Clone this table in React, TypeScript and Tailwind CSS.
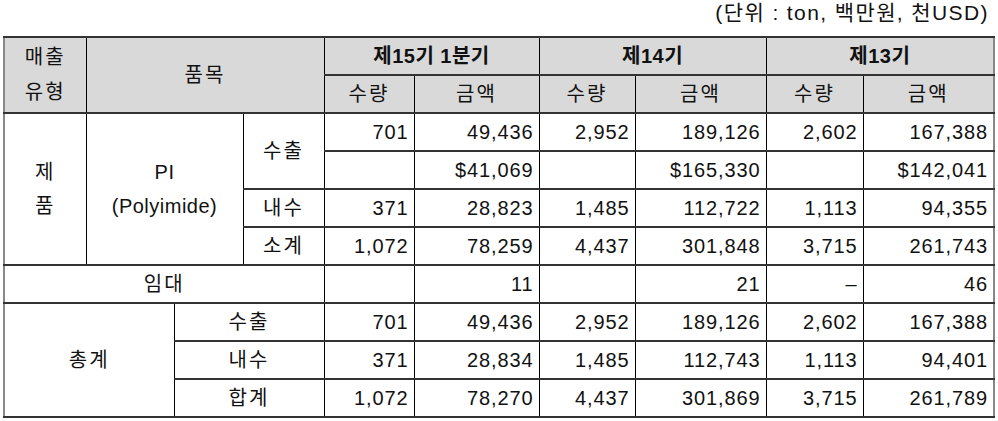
const font = { fontFamily: '"Liberation Sans", "Noto Sans CJK KR", sans-serif' };

const cell = "border-x border-x-black border-y-2 border-y-[#333]";
const hd = `bg-[#d9d9d9] ${cell} text-center`;
const td = `${cell} px-[5px]`;
const num = `${td} text-right tracking-[0.9px]`;
const lbl = `${td} text-center tracking-[2px]`;

type Row = string[];

const periods = ["제15기 1분기", "제14기", "제13기"];

const product: Row[] = [
  ["701", "49,436", "2,952", "189,126", "2,602", "167,388"],
  ["", "$41,069", "", "$165,330", "", "$142,041"],
  ["371", "28,823", "1,485", "112,722", "1,113", "94,355"],
  ["1,072", "78,259", "4,437", "301,848", "3,715", "261,743"],
];

const rent: Row = ["", "11", "", "21", "–", "46"];

const total: { name: string; vals: Row }[] = [
  { name: "수출", vals: ["701", "49,436", "2,952", "189,126", "2,602", "167,388"] },
  { name: "내수", vals: ["371", "28,834", "1,485", "112,743", "1,113", "94,401"] },
  { name: "합계", vals: ["1,072", "78,270", "4,437", "301,869", "3,715", "261,789"] },
];

function Nums({ vals }: { vals: Row }) {
  return (
    <>
      {vals.map((v, i) => (
        <td key={i} className={num}>
          {v}
        </td>
      ))}
    </>
  );
}

export default function App() {
  return (
    <div className="w-[998px] h-[421px] bg-white text-[20px] text-[#111]" style={font}>
      <div className="h-[36px] flex justify-end pr-[9px] leading-[26px] text-[21px] tracking-[1.4px]">
        (단위 : ton, 백만원, 천USD)
      </div>
      <table className="ml-[3px] w-[992px] table-fixed border-collapse border-2 border-[#888] border-t-[#333]">
        <colgroup>
          <col className="w-[82px]" />
          <col className="w-[88px]" />
          <col className="w-[69px]" />
          <col className="w-[81px]" />
          <col className="w-[90px]" />
          <col className="w-[125px]" />
          <col className="w-[96px]" />
          <col className="w-[131px]" />
          <col className="w-[97px]" />
          <col />
        </colgroup>
        <thead>
          <tr className="h-[38px]">
            <th rowSpan={2} className={`${hd} font-normal leading-[35px] tracking-[2px]`}>
              매출
              <br />
              유형
            </th>
            <th rowSpan={2} colSpan={3} className={`${hd} font-normal tracking-[2px]`}>
              품목
            </th>
            {periods.map((p) => (
              <th key={p} colSpan={2} className={`${hd} font-bold tracking-[0.5px]`}>
                {p}
              </th>
            ))}
          </tr>
          <tr className="h-[38px]">
            {periods.map((p) => (
              <>
                <th key={p + "q"} className={`${hd} font-normal tracking-[2px]`}>
                  수량
                </th>
                <th key={p + "a"} className={`${hd} font-normal tracking-[2px]`}>
                  금액
                </th>
              </>
            ))}
          </tr>
        </thead>
        <tbody>
          <tr className="h-[38px]">
            <td rowSpan={4} className={`${lbl} leading-[34px]`}>
              제
              <br />품
            </td>
            <td rowSpan={4} colSpan={2} className={`${td} text-center leading-[34px] tracking-[0.5px]`}>
              PI
              <br />
              (Polyimide)
            </td>
            <td rowSpan={2} className={lbl}>
              수출
            </td>
            <Nums vals={product[0]} />
          </tr>
          <tr className="h-[38px]">
            <Nums vals={product[1]} />
          </tr>
          <tr className="h-[38px]">
            <td className={lbl}>내수</td>
            <Nums vals={product[2]} />
          </tr>
          <tr className="h-[38px]">
            <td className={lbl}>소계</td>
            <Nums vals={product[3]} />
          </tr>
          <tr className="h-[38px]">
            <td colSpan={4} className={lbl}>
              임대
            </td>
            <Nums vals={rent} />
          </tr>
          {total.map((r, i) => (
            <tr key={r.name} className="h-[38px]">
              {i === 0 && (
                <td rowSpan={3} colSpan={2} className={lbl}>
                  총계
                </td>
              )}
              <td colSpan={2} className={lbl}>
                {r.name}
              </td>
              <Nums vals={r.vals} />
            </tr>
          ))}
        </tbody>
      </table>
    </div>
  );
}
